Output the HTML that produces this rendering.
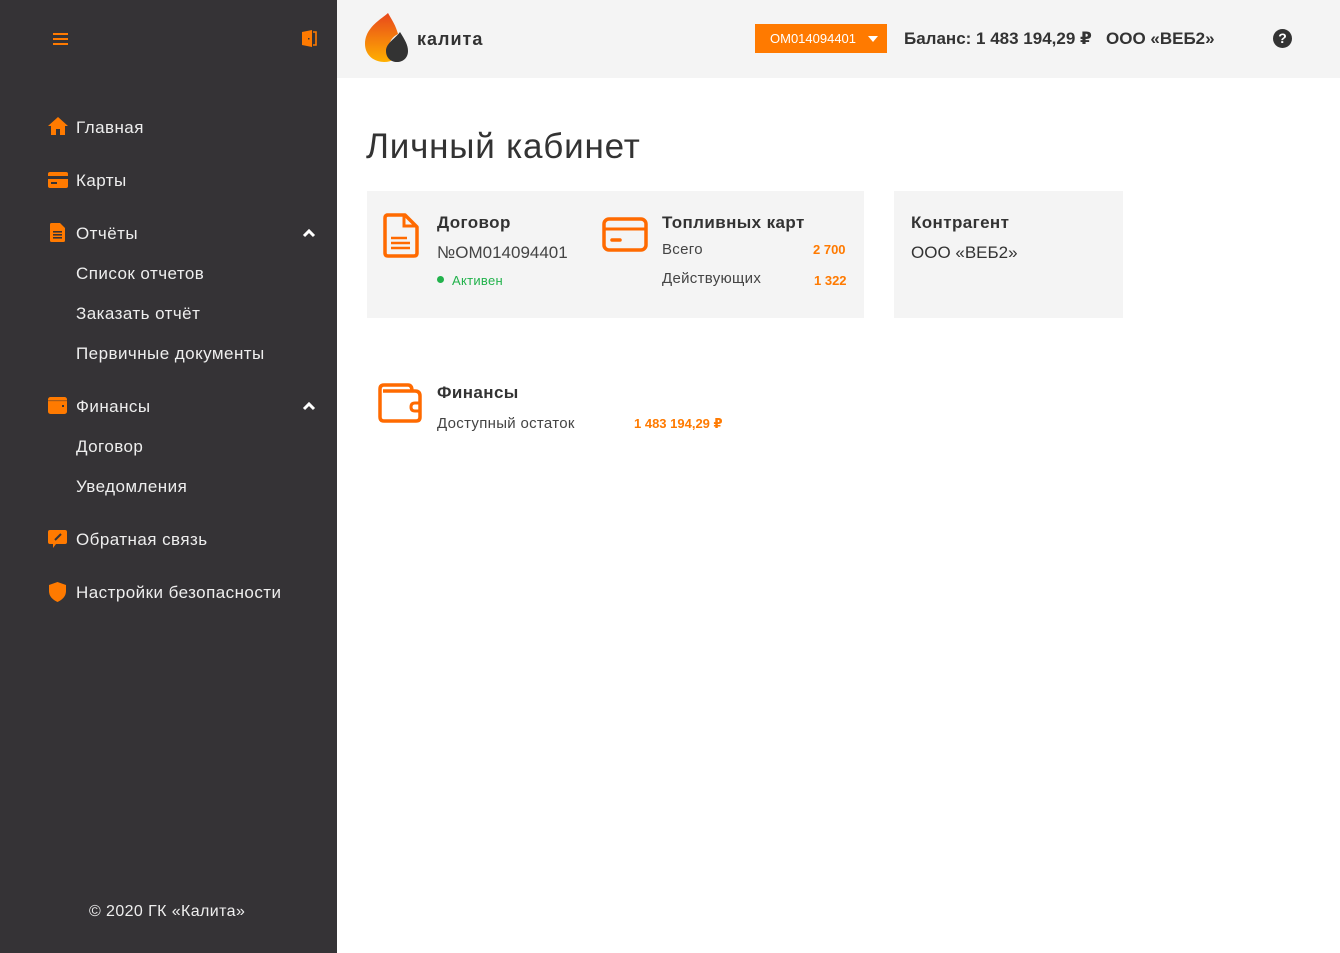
<!DOCTYPE html>
<html><head><meta charset="utf-8"><style>
*{margin:0;padding:0;box-sizing:border-box}
body{width:1340px;height:953px;overflow:hidden;font-family:"Liberation Sans","DejaVu Sans",sans-serif;background:#fff;position:relative;color:#333}
.sb{position:absolute;left:0;top:0;width:337px;height:953px;background:#353336;color:#eee}
.it{position:absolute;left:76px;font-size:17px;color:#eee;white-space:nowrap;letter-spacing:0.45px}
.ic{position:absolute;left:48px}
.chev{position:absolute;left:302px}
.hd{position:absolute;left:337px;top:0;width:1003px;height:78px;background:#f4f4f4}
.abs{position:absolute;white-space:nowrap}
.card{position:absolute;background:#f4f4f4}
.or{color:#ff7a00;font-weight:bold;font-size:13px}
</style></head><body>
<div class="sb">
<svg class="abs" style="left:53px;top:33px" width="15" height="12"><rect y="0" width="15" height="2" fill="#ff7a00"/><rect y="5" width="15" height="2" fill="#ff7a00"/><rect y="10" width="15" height="2" fill="#ff7a00"/></svg>
<svg class="abs" style="left:302px;top:30px" width="15" height="17"><path d="M0 2 L10 0 V17 L0 15Z" fill="#ff7a00"/><path d="M11 2h3v13h-3" stroke="#ff7a00" stroke-width="1.6" fill="none"/><rect x="6" y="8" width="1.5" height="1.5" fill="#353336"/></svg>

<svg class="ic" style="top:117px" width="20" height="18"><path d="M10 0 L20 9 H17 V18 H12 V12 H8 V18 H3 V9 H0Z" fill="#ff7a00"/></svg>
<div class="it" style="top:118px">Главная</div>
<svg class="ic" style="top:172px" width="20" height="16"><rect width="20" height="16" rx="2" fill="#ff7a00"/><rect y="4" width="20" height="3" fill="#353336"/><rect x="3" y="10" width="6" height="2" fill="#353336"/></svg>
<div class="it" style="top:171px">Карты</div>
<svg class="ic" style="top:223px;left:50px" width="15" height="19"><path d="M0 1.5Q0 0 1.5 0H10L15 5V17.5Q15 19 13.5 19H1.5Q0 19 0 17.5Z" fill="#ff7a00"/><rect x="3" y="8" width="9" height="1.6" fill="#353336"/><rect x="3" y="11" width="9" height="1.6" fill="#353336"/><rect x="3" y="14" width="9" height="1.6" fill="#353336"/></svg>
<div class="it" style="top:224px">Отчёты</div>
<svg class="chev" style="top:228px" width="14" height="10"><path d="M2 8 L7 3 L12 8" stroke="#fff" stroke-width="3" fill="none"/></svg>
<div class="it" style="top:264px">Список отчетов</div>
<div class="it" style="top:304px">Заказать отчёт</div>
<div class="it" style="top:344px">Первичные документы</div>
<svg class="ic" style="top:397px" width="19" height="17"><rect width="19" height="17" rx="2.5" fill="#ff7a00"/><rect x="0" y="3" width="19" height="1.2" fill="#353336" opacity=".4"/><rect x="14" y="8" width="2" height="2" fill="#353336"/></svg>
<div class="it" style="top:397px">Финансы</div>
<svg class="chev" style="top:401px" width="14" height="10"><path d="M2 8 L7 3 L12 8" stroke="#fff" stroke-width="3" fill="none"/></svg>
<div class="it" style="top:437px">Договор</div>
<div class="it" style="top:477px">Уведомления</div>
<svg class="ic" style="top:530px" width="19" height="19"><path d="M2 0H17Q19 0 19 2V12Q19 14 17 14H8L5 18V14H2Q0 14 0 12V2Q0 0 2 0Z" fill="#ff7a00"/><path d="M7 10L13 4" stroke="#353336" stroke-width="2"/></svg>
<div class="it" style="top:530px">Обратная связь</div>
<svg class="ic" style="top:582px;left:49px" width="17" height="20"><path d="M8.5 0 L17 3 V9 Q17 16 8.5 20 Q0 16 0 9 V3Z" fill="#ff7a00"/></svg>
<div class="it" style="top:583px">Настройки безопасности</div>
<div class="abs" style="left:89px;top:903px;font-size:16px;color:#eee;letter-spacing:0.4px">© 2020 ГК «Калита»</div>
</div>

<div class="hd">
<svg class="abs" style="left:27px;top:12px" width="44" height="51"><defs><linearGradient id="g" x1="0" y1="0" x2="0" y2="1"><stop offset="0" stop-color="#e8471c"/><stop offset="1" stop-color="#ffb000"/></linearGradient></defs><path d="M24 1 C16 8 1 16 1 32 C1 43 10 50 20 50 C28 50 33 46 34 42 C24 40 22 28 34 22 C32 14 28 8 24 1Z" fill="url(#g)"/><path d="M36 20 C41 28 44 33 44 39 C44 46 39 50 33 50 C27 50 22 46 22 39 C22 31 31 27 36 20Z" fill="#333"/></svg>
<div class="abs" style="left:80px;top:29px;font-size:18px;font-weight:bold;color:#333;letter-spacing:1px">калита</div>
<div class="abs" style="left:418px;top:24px;width:132px;height:29px;background:#ff7a00;color:#fff;font-size:13px;padding:7px 0 0 15px">OM014094401</div>
<svg class="abs" style="left:531px;top:36px" width="10" height="6"><path d="M0 0H10L5 6Z" fill="#fff"/></svg>
<div class="abs" style="left:567px;top:29px;font-size:17px;font-weight:bold;color:#333">Баланс: 1 483 194,29 ₽</div>
<div class="abs" style="left:769px;top:29px;font-size:17px;font-weight:bold;color:#333">ООО «ВЕБ2»</div>
<div class="abs" style="left:936px;top:29px;width:19px;height:19px;border-radius:50%;background:#333;color:#fff;font-size:14px;font-weight:bold;text-align:center;line-height:19px">?</div>
</div>

<div class="abs" style="left:366px;top:127px;font-size:35px;color:#333;letter-spacing:0.8px">Личный кабинет</div>

<div class="card" style="left:367px;top:191px;width:497px;height:127px"></div>
<div class="card" style="left:894px;top:191px;width:229px;height:127px"></div>

<svg class="abs" style="left:383px;top:213px" width="36" height="45"><path d="M4 2H22L34 14V40Q34 43 31 43H5Q2 43 2 40V5Q2 2 5 2Z" fill="none" stroke="#ff6a00" stroke-width="3.5" stroke-linejoin="round"/><path d="M21 2V13H33" fill="none" stroke="#ff6a00" stroke-width="3"/><path d="M8 25H24M8 30H27M8 35H27" stroke="#ff6a00" stroke-width="2.5"/></svg>
<div class="abs" style="left:437px;top:213px;font-size:17px;font-weight:bold;color:#333;letter-spacing:0.4px">Договор</div>
<div class="abs" style="left:437px;top:243px;font-size:17px;color:#444">№OM014094401</div>
<div class="abs" style="left:437px;top:276px;width:7px;height:7px;border-radius:50%;background:#22b24c"></div>
<div class="abs" style="left:452px;top:273px;font-size:13px;color:#22b24c;letter-spacing:0.3px">Активен</div>

<svg class="abs" style="left:602px;top:217px" width="46" height="35"><rect x="2" y="2" width="42" height="31" rx="5" fill="none" stroke="#ff6a00" stroke-width="3.5"/><path d="M2 12H44" stroke="#ff6a00" stroke-width="3"/><path d="M10 23H18" stroke="#ff6a00" stroke-width="3.5" stroke-linecap="round"/></svg>
<div class="abs" style="left:662px;top:213px;font-size:17px;font-weight:bold;color:#333;letter-spacing:0.4px">Топливных карт</div>
<div class="abs" style="left:662px;top:241px;font-size:15px;color:#444;letter-spacing:0.3px">Всего</div>
<div class="abs or" style="left:813px;top:242px">2 700</div>
<div class="abs" style="left:662px;top:270px;font-size:15px;color:#444;letter-spacing:0.3px">Действующих</div>
<div class="abs or" style="left:814px;top:273px">1 322</div>

<div class="abs" style="left:911px;top:213px;font-size:17px;font-weight:bold;color:#333;letter-spacing:0.4px">Контрагент</div>
<div class="abs" style="left:911px;top:243px;font-size:17px;color:#333">ООО «ВЕБ2»</div>

<svg class="abs" style="left:378px;top:383px" width="45" height="40"><path d="M5 8H37Q42 8 42 13V34Q42 38 38 38H6Q2 38 2 34V6Q2 2 6 2H30Q34 2 34 8" fill="none" stroke="#ff6a00" stroke-width="3.5" stroke-linejoin="round"/><path d="M42 20H37Q33 20 33 24Q33 28 37 28H42" fill="none" stroke="#ff6a00" stroke-width="3"/></svg>
<div class="abs" style="left:437px;top:383px;font-size:17px;font-weight:bold;color:#333;letter-spacing:0.4px">Финансы</div>
<div class="abs" style="left:437px;top:415px;font-size:15px;color:#444;letter-spacing:0.3px">Доступный остаток</div>
<div class="abs or" style="left:634px;top:416px">1 483 194,29 ₽</div>
</body></html>
